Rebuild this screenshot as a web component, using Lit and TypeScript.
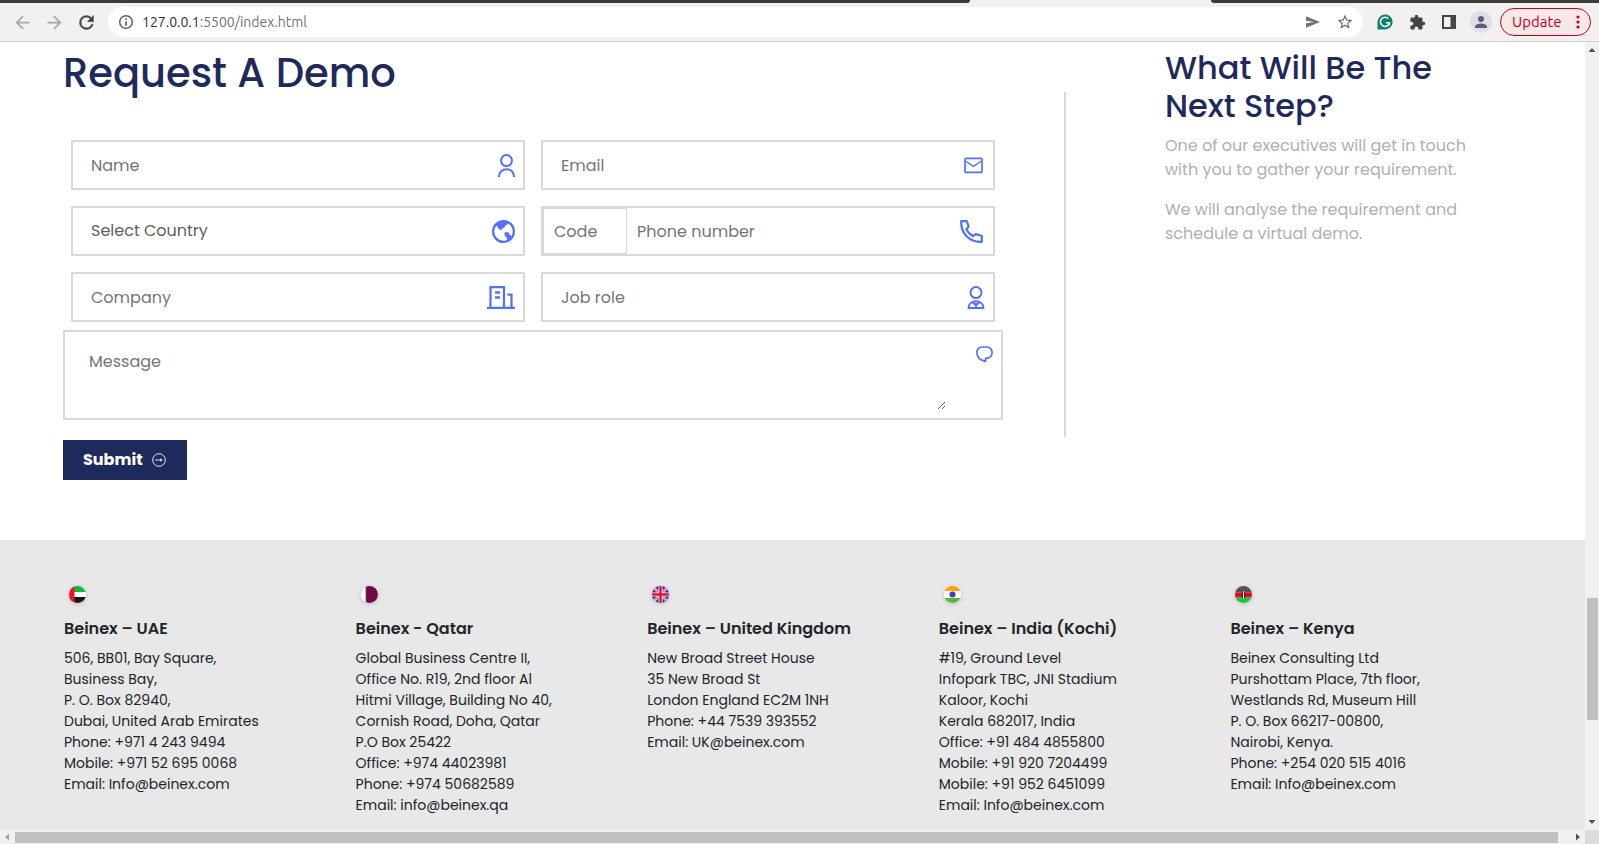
import { LitElement, html, css, svg } from "lit";
import { customElement } from "lit/decorators.js";

const sans = css`Poppins, Inter, "Open Sans", sans-serif`;

const icons = {
  user: html`<svg width="17" height="23" viewBox="0 0 17 23" fill="none" stroke="#5271ff" stroke-width="2">
    <circle cx="8.5" cy="6.6" r="5.5" /><path d="M1 23v-.8a7.5 7 0 0 1 15 0v.8" /></svg>`,
  globe: html`<svg width="23" height="23" viewBox="0 0 23 23">
    <circle cx="11.5" cy="11.5" r="10.4" fill="none" stroke="#5271ff" stroke-width="2.2" />
    <path fill="#5271ff" d="M3.6 4.6C6 1.600 9 .6 12 .8c1.700.1 3.200.6 4.400 1.100l-.9 2.500-2.300 1.200-.6 2-2.400.6-.8 2-1.200-.4-1.800-1.400-1.500-2.400Z" />
    <path fill="#5271ff" d="M12.700 12.200h3.800l1.300 2.600 1.800 1.200.2 2.300-4.200 3.200-.9-.4.500-3.400-1.900-1-1-2.600Z" /></svg>`,
  building: html`<svg width="28" height="23" viewBox="0 0 28 23" fill="none" stroke="#5271ff" stroke-width="2.200">
    <path d="M0 21.900h28M3.500 22V1.100h13.500v21M20.500 8.700h4v13.300" /><path stroke-width="2.400" d="M8 6.500h5M8 11.500h5" /></svg>`,
  mail: html`<svg width="21" height="17" viewBox="0 0 21 17" fill="none" stroke="#5271ff" stroke-width="1.700">
    <rect x="1" y="1.400" width="17" height="14" rx="1" /><path d="M1.500 4 9.500 9.300 17.500 4" stroke-width="1.400" /></svg>`,
  phone: html`<svg width="25" height="23" viewBox="0 0 25 23" fill="none" stroke="#5271ff" stroke-width="2.200" stroke-linejoin="round">
    <path d="M1.200 1.100h5.600L8.600 6.700 6.300 9.200c1.700 3.400 3.300 5 6.800 7l2.700-2.100 6 1.900v5.800C10 22.400.6 14 1.200 1.100Z" /></svg>`,
  worker: html`<svg width="18" height="23" viewBox="0 0 18 23" fill="none" stroke="#5271ff" stroke-width="2">
    <circle cx="9" cy="6.600" r="5.500" /><path d="M1.600 22c0-4 3-6.700 7.400-6.700s7.400 2.700 7.400 6.700ZM9 17v5M5.500 16.500 9 19l3.500-2.500" /></svg>`,
  chat: html`<svg width="17" height="17" viewBox="0 0 17 17" fill="none" stroke="#5271ff" stroke-width="1.700">
    <path d="M6 1h5c3 0 5.100 2.600 5.100 5.500 0 3.700-2.600 5.700-6.400 5.900l-.3 3C4 14 .9 11 .9 6.500.9 3.600 3 1 6 1Z" /></svg>`,
  go: html`<svg width="14" height="14" viewBox="0 0 14 14" fill="none" stroke="#dfe8f0" stroke-width="1">
    <circle cx="7" cy="7" r="6.300" /><path d="M3.200 7h6" /><path d="M8.300 5.200 10.800 7 8.300 8.800Z" fill="#dfe8f0" stroke="none" /></svg>`,
  back: html`<svg width="21" height="21" viewBox="0 0 24 24" fill="#a9a8a6"><path d="M20 11H7.830l5.590-5.590L12 4l-8 8 8 8 1.410-1.410L7.830 13H20v-2Z" /></svg>`,
  forward: html`<svg width="21" height="21" viewBox="0 0 24 24" fill="#a9a8a6"><path d="M4 13h12.170l-5.590 5.590L12 20l8-8-8-8-1.410 1.410L16.170 11H4v2Z" /></svg>`,
  reload: html`<svg width="21" height="21" viewBox="0 0 24 24" fill="#454543" stroke="#454543" stroke-width=".5"><path d="M17.650 6.350A7.960 7.960 0 0 0 12 4a8 8 0 1 0 7.730 10h-2.080A6 6 0 1 1 12 6c1.660 0 3.140.69 4.220 1.780L13 11h7V4l-2.350 2.350Z" /></svg>`,
  info: html`<svg width="16" height="16" viewBox="0 0 16 16"><circle cx="8" cy="8" r="6.300" fill="none" stroke="#5f6063" stroke-width="1.500" /><path fill="#5f6063" d="M7.200 4.300h1.700v1.600H7.200zM7.200 7.200h1.700v4.500H7.200z" /></svg>`,
  send: html`<svg width="16" height="16" viewBox="0 0 16 16" fill="#737373"><path d="M1 2.200 15 8 1 13.800V9.300L9 8 1 6.700Z" /></svg>`,
  star: html`<svg width="18" height="18" viewBox="0 0 24 24" fill="#6b6b6b"><path d="m22 9.240-7.190-.62L12 2 9.190 8.630 2 9.240l5.460 4.730L5.820 21 12 17.270 18.180 21l-1.630-7.030L22 9.240ZM12 15.400l-3.760 2.270 1-4.280-3.320-2.880 4.380-.38L12 6.100l1.710 4.040 4.380.38-3.320 2.880 1 4.280L12 15.400Z" /></svg>`,
  grammar: html`<svg width="16" height="16" viewBox="0 0 16 16"><path fill="#0b8068" d="M8.200.5a7.500 7.500 0 1 1-.1 15H.5V8A7.600 7.600 0 0 1 8.200.5Z" /><path fill="none" stroke="#fff" stroke-width="1.600" d="M11.300 4.600A4.600 4.600 0 1 0 12.500 8.800H8.800M12.300 8.300v3.200" /></svg>`,
  puzzle: html`<svg width="17" height="17" viewBox="0 0 24 24" fill="#454545"><path d="M20.500 11H19V7c0-1.100-.9-2-2-2h-4V3.500a2.500 2.500 0 0 0-5 0V5H4c-1.100 0-2 .9-2 2v3.800h1.500a2.700 2.700 0 0 1 0 5.400H2V20c0 1.100.9 2 2 2h3.800v-1.500a2.700 2.700 0 0 1 5.400 0V22H17c1.100 0 2-.9 2-2v-4h1.500a2.500 2.500 0 0 0 0-5Z" /></svg>`,
  panel: html`<svg width="16" height="16" viewBox="0 0 16 16"><path fill="#454545" fill-rule="evenodd" d="M1 1h14v14H1ZM3 3v10h6.500V3Z" /></svg>`,
  avatar: html`<svg width="22" height="22" viewBox="0 0 22 22"><circle cx="11" cy="11" r="11" fill="#dedfe6" /><circle cx="11" cy="8" r="3" fill="#5b5d76" /><path fill="#5b5d76" d="M5 17v-1.500c0-2 4-3 6-3s6 1 6 3V17Z" /></svg>`,
  dots: html`<svg width="4" height="14" viewBox="0 0 4 14" fill="#c5000f"><circle cx="2" cy="2" r="1.600" /><circle cx="2" cy="7" r="1.600" /><circle cx="2" cy="12" r="1.600" /></svg>`,
};

const flagArt = {
  uae: svg`<path fill="#12b83c" d="M0 0h17v6H0z"/><path fill="#fff" d="M0 6h17v5H0z"/><path fill="#151515" d="M0 11h17v6H0z"/><path fill="#f5102c" d="M0 0h5.500v17H0z"/>`,
  qatar: svg`<path fill="#fff" d="M0 0h17v17H0z"/><path fill="#740845" d="M17 0H4l1.500 1L4 2l1.500 1L4 4l1.500 1L4 6l1.500 1L4 8l1.500 1L4 10l1.500 1L4 12l1.500 1L4 14l1.500 1L4 16l1.500 1H17Z"/>`,
  uk: svg`<path fill="#2a22a8" d="M0 0h17v17H0z"/><path stroke="#fff" stroke-width="2.600" d="m0 0 17 17M17 0 0 17"/><path stroke="#e8425c" stroke-width="1.200" d="m0 0 17 17M17 0 0 17"/><path stroke="#fff" stroke-width="4" d="M8.500 0v17M0 8.500h17"/><path stroke="#e30a2c" stroke-width="2.400" d="M8.500 0v17M0 8.500h17"/>`,
  india: svg`<path fill="#ff9f0a" d="M0 0h17v5H0z"/><path fill="#fff" d="M0 5h17v7H0z"/><path fill="#55b836" d="M0 12h17v5H0z"/><circle cx="8.500" cy="8.500" r="3" fill="#3a2bc4"/><circle cx="8.500" cy="8.500" r="1.800" fill="none" stroke="#7d74d8" stroke-width=".5"/>`,
  kenya: svg`<path fill="#535353" d="M0 0h17v6.500H0z"/><path fill="#dd0a24" d="M0 6.500h17v5H0z"/><path fill="#12c93c" d="M0 11.500h17V17H0z"/><ellipse cx="8.500" cy="9" rx="2.200" ry="3.600" fill="#8e0a18"/><path fill="#fff" d="M8 5.200h1v7.600H8z"/>`,
};

type Office = { flag: keyof typeof flagArt; name: string; lines: string[] };

const offices: Office[] = [
  { flag: "uae", name: "Beinex – UAE", lines: ["506, BB01, Bay Square,", "Business Bay,", "P. O. Box 82940,", "Dubai, United Arab Emirates", "Phone: +971 4 243 9494", "Mobile: +971 52 695 0068", "Email: Info@beinex.com"] },
  { flag: "qatar", name: "Beinex - Qatar", lines: ["Global Business Centre II,", "Office No. R19, 2nd floor Al", "Hitmi Village, Building No 40,", "Cornish Road, Doha, Qatar", "P.O Box 25422", "Office: +974 44023981", "Phone: +974 50682589", "Email: info@beinex.qa"] },
  { flag: "uk", name: "Beinex – United Kingdom", lines: ["New Broad Street House", "35 New Broad St", "London England EC2M 1NH", "Phone: +44 7539 393552", "Email: UK@beinex.com"] },
  { flag: "india", name: "Beinex – India (Kochi)", lines: ["#19, Ground Level", "Infopark TBC, JNI Stadium", "Kaloor, Kochi", "Kerala 682017, India", "Office: +91 484 4855800", "Mobile: +91 920 7204499", "Mobile: +91 952 6451099", "Email: Info@beinex.com"] },
  { flag: "kenya", name: "Beinex – Kenya", lines: ["Beinex Consulting Ltd", "Purshottam Place, 7th floor,", "Westlands Rd, Museum Hill", "P. O. Box 66217-00800,", "Nairobi, Kenya.", "Phone: +254 020 515 4016", "Email: Info@beinex.com"] },
];

@customElement("browser-bar")
export class BrowserBar extends LitElement {
  static styles = css`
    :host { display: block; font-family: Ubuntu, "Noto Sans", sans-serif; }
    .tabs { display: flex; justify-content: space-between; height: 3px; background: #f2f1f0; }
    .tab-edge { background: #3c3b37; }
    .before { flex: 0 0 970px; border-bottom-right-radius: 3px; }
    .after { flex: 0 0 388px; border-bottom-left-radius: 3px; }
    .toolbar { display: flex; align-items: center; height: 38px; padding: 0 8px 0 6px; background: #f2f1f0; border-bottom: 1px solid #cfcecc; }
    button { display: flex; align-items: center; justify-content: center; flex: none; width: 32px; height: 30px; padding: 0; border: 0; background: none; }
    .address { display: flex; align-items: center; flex: 1; min-width: 0; height: 30px; margin: 0 6px; padding: 0 2px 0 10px; border-radius: 15px; background: #fff; }
    .url { flex: 1; margin-left: 8px; font-size: 14px; line-height: 20px; color: #73716e; white-space: nowrap; }
    .host { color: #2e2e2e; }
    .update { justify-content: space-between; width: 91px; height: 28px; margin-left: 3px; padding: 0 10px 0 11px; border: 1px solid #c5000f; border-radius: 14px; background: #f8e8e9; color: #c5000f; font: 15px/20px Ubuntu, "Noto Sans", sans-serif; }
  `;
  render() {
    return html`
      <div class="tabs"><div class="tab-edge before"></div><div class="tab-edge after"></div></div>
      <div class="toolbar">
        <button aria-label="Back">${icons.back}</button>
        <button aria-label="Forward">${icons.forward}</button>
        <button aria-label="Reload">${icons.reload}</button>
        <div class="address">
          ${icons.info}
          <div class="url" role="textbox" aria-label="Address"><span class="host">127.0.0.1</span>:5500/index.html</div>
          <button aria-label="Share">${icons.send}</button>
          <button aria-label="Bookmark">${icons.star}</button>
        </div>
        <button aria-label="Grammarly">${icons.grammar}</button>
        <button aria-label="Extensions">${icons.puzzle}</button>
        <button aria-label="Side panel">${icons.panel}</button>
        <button aria-label="Profile">${icons.avatar}</button>
        <button class="update">Update ${icons.dots}</button>
      </div>`;
  }
}

@customElement("demo-form")
export class DemoForm extends LitElement {
  static styles = css`
    :host { display: block; font-family: ${sans}; }
    * { box-sizing: border-box; }
    h1 { margin: 0 0 43px; font-size: 40px; line-height: 48px; font-weight: 500; color: #1f2a5c; }
    .grid { display: grid; grid-template-columns: 1fr 1fr; gap: 16px; padding: 0 8px; margin-bottom: 8px; }
    .field { display: flex; align-items: center; height: 50px; padding: 0 8px 0 18px; border: 2px solid #d9d9d9; background: #fff; }
    .field svg { flex: none; }
    .phone { padding-left: 0; }
    input, select, textarea { flex: 1; min-width: 0; height: 46px; padding: 0; border: 0; outline: 0; background: none; appearance: none; color: #5f5f5f; font: 16px/24px ${sans}; }
    input::placeholder, textarea::placeholder { color: #757575; opacity: 1; }
    .phone .code { flex: 0 0 84px; padding: 0 10px; margin-right: 10px; border: 1px solid #d9d9d9; }
    .message { display: flex; align-items: flex-start; justify-content: space-between; height: 90px; padding: 8px 8px 8px 14px; border: 2px solid #d9d9d9; }
    .message textarea { flex: 0 1 867px; height: 70px; padding: 10px; resize: both; }
    .message svg { margin-top: 6px; }
    .submit { display: flex; align-items: center; gap: 9px; height: 40px; margin-top: 20px; padding: 0 21px 0 20px; border: 0; background: #1f2a5c; color: #fff; font: 700 16px/24px ${sans}; }
  `;
  render() {
    return html`
      <h1>Request A Demo</h1>
      <form>
        <div class="grid">
          <div class="field"><input aria-label="Name" placeholder="Name" />${icons.user}</div>
          <div class="field"><input type="email" aria-label="Email" placeholder="Email" />${icons.mail}</div>
          <div class="field"><select aria-label="Country"><option>Select Country</option></select>${icons.globe}</div>
          <div class="field phone">
            <input class="code" aria-label="Code" placeholder="Code" />
            <input type="tel" aria-label="Phone number" placeholder="Phone number" />${icons.phone}
          </div>
          <div class="field"><input aria-label="Company" placeholder="Company" />${icons.building}</div>
          <div class="field"><input aria-label="Job role" placeholder="Job role" />${icons.worker}</div>
        </div>
        <div class="message"><textarea aria-label="Message" placeholder="Message"></textarea>${icons.chat}</div>
        <button class="submit" type="button">Submit ${icons.go}</button>
      </form>`;
  }
}

@customElement("office-list")
export class OfficeList extends LitElement {
  static styles = css`
    :host { display: grid; grid-template-columns: repeat(5, minmax(0, 1fr)); padding: 46px 63px 0 64px; background: #e8e8e8; color: #212529; font-family: ${sans}; }
    .flag { display: block; width: 17px; height: 17px; margin: 0 0 16px 5px; border-radius: 50%; box-shadow: 0 1px 5px rgba(0, 0, 0, 0.18); }
    h2 { margin: 0 0 9px; font-size: 16px; line-height: 20px; font-weight: 600; }
    p { margin: 0; font-size: 14px; line-height: 21px; white-space: nowrap; }
  `;
  render() {
    return offices.map(
      (o) => html`<section>
        <svg class="flag" viewBox="0 0 17 17">${flagArt[o.flag]}</svg>
        <h2>${o.name}</h2>
        ${o.lines.map((line) => html`<p>${line}</p>`)}
      </section>`
    );
  }
}

@customElement("app-root")
export class AppRoot extends LitElement {
  static styles = css`
    :host { display: flex; flex-direction: column; height: 100vh; overflow: hidden; background: #fff; font-family: ${sans}; }
    * { box-sizing: border-box; }
    .view { display: grid; grid-template: minmax(0, 1fr) 14px / minmax(0, 1fr) 14px; flex: 1; min-height: 0; }
    .page { display: flex; flex-direction: column; overflow: hidden; }
    .request { display: flex; padding: 7px 86px 60px 63px; }
    demo-form { flex: 940 1 0; min-width: 0; }
    .divider { flex: none; width: 2px; margin: 43px 99px 43px 61px; background: #d9d9d9; }
    aside { flex: 334 1 0; min-width: 0; }
    h2 { margin: 0 0 9px; font-size: 32px; line-height: 38px; font-weight: 500; color: #1f2a5c; }
    p { margin: 0 0 16px; font-size: 16px; line-height: 24px; color: #b0b0b0; }
    office-list { flex: 1; }
    .bar { display: flex; align-items: center; justify-content: space-between; background: #f1f1f1; }
    .bar svg { flex: none; }
    .vertical { flex-direction: column; }
    .thumb { background: #c1c1c1; }
    .vertical .thumb { width: 11px; height: 122px; margin-top: 540px; margin-bottom: auto; }
    .horizontal .thumb { flex: 1; height: 11px; margin-right: 13px; }
    .corner { background: #dcdcdc; }
  `;
  render() {
    return html`
      <browser-bar></browser-bar>
      <div class="view">
        <main class="page">
          <div class="request">
            <demo-form></demo-form>
            <div class="divider"></div>
            <aside>
              <h2>What Will Be The<br />Next Step?</h2>
              <p>One of our executives will get in touch<br />with you to gather your requirement.</p>
              <p>We will analyse the requirement and<br />schedule a virtual demo.</p>
            </aside>
          </div>
          <office-list></office-list>
        </main>
        <div class="bar vertical">
          <svg width="14" height="16" viewBox="0 0 14 16"><path fill="#505050" d="M3.500 10 7 6l3.500 4Z" /></svg>
          <div class="thumb"></div>
          <svg width="14" height="16" viewBox="0 0 14 16"><path fill="#505050" d="M3.500 6 7 10l3.500-4Z" /></svg>
        </div>
        <div class="bar horizontal">
          <svg width="15" height="14" viewBox="0 0 15 14"><path fill="#a3a3a3" d="M9 3.500 5 7l4 3.500Z" /></svg>
          <div class="thumb"></div>
          <svg width="14" height="14" viewBox="0 0 14 14"><path fill="#505050" d="M5 3.500 9 7l-4 3.500Z" /></svg>
        </div>
        <div class="corner"></div>
      </div>`;
  }
}
